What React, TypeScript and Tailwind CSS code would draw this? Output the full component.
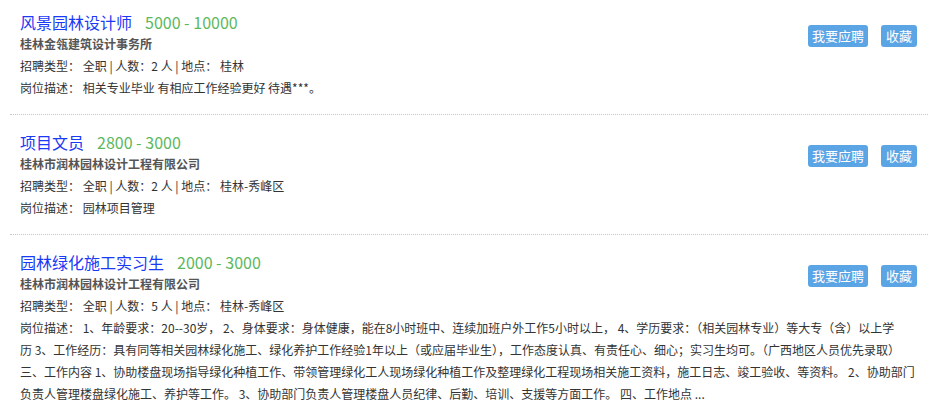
const jobs = [
  {
    title: "风景园林设计师",
    salary: "5000 - 10000",
    company: "桂林金瓴建筑设计事务所",
    count: 2,
    place: "桂林",
    desc: ["相关专业毕业 有相应工作经验更好 待遇***。"],
  },
  {
    title: "项目文员",
    salary: "2800 - 3000",
    company: "桂林市润林园林设计工程有限公司",
    count: 2,
    place: "桂林-秀峰区",
    desc: ["园林项目管理"],
  },
  {
    title: "园林绿化施工实习生",
    salary: "2000 - 3000",
    company: "桂林市润林园林设计工程有限公司",
    count: 5,
    place: "桂林-秀峰区",
    desc: [
      "1、年龄要求：20--30岁， 2、身体要求：身体健康，能在8小时班中、连续加班户外工作5小时以上， 4、学历要求：（相关园林专业）等大专（含）以上学",
      "历 3、工作经历：具有同等相关园林绿化施工、绿化养护工作经验1年以上（或应届毕业生），工作态度认真、有责任心、细心；实习生均可。（广西地区人员优先录取）",
      "三、工作内容 1、协助楼盘现场指导绿化种植工作、带领管理绿化工人现场绿化种植工作及整理绿化工程现场相关施工资料，施工日志、竣工验收、等资料。 2、协助部门",
      "负责人管理楼盘绿化施工、养护等工作。 3、协助部门负责人管理楼盘人员纪律、后勤、培训、支援等方面工作。 四、工作地点 ...",
    ],
  },
];

export default function App() {
  return (
    <div className="min-h-screen bg-white font-['Noto_Sans_CJK_SC',sans-serif] text-[#333]">
      <ul className="ml-[10px] w-[918px]">
        {jobs.map((job, i) => (
          <li
            key={job.title}
            className={`border-b border-dotted border-[#c8c8c8] px-[10px] pb-[15px] ${i === 0 ? "pt-[11px]" : "pt-[16px]"}`}
          >
            <div className="flex">
              <div className="flex-1">
                <div className="flex h-[22px] items-center">
                  <a className="text-[16px] leading-[22px] text-[#1a3af5]">{job.title}</a>
                  <span className="ml-[13px] text-[16px] leading-[22px] text-[#5cb85c]">{job.salary}</span>
                </div>
                <div className="text-[12px] font-bold leading-[22px] text-[#555]">{job.company}</div>
                <div className="text-[12px] leading-[22px]">
                  招聘类型： 全职 | 人数：{job.count} 人 | 地点： {job.place}
                </div>
              </div>
              <div className="mt-[14px] flex items-start gap-[13px] pr-[1px]">
                <button className="h-[22px] w-[60px] rounded-[3px] bg-[#5ba5e5] text-[13px] leading-[22px] text-white">
                  我要应聘
                </button>
                <button className="h-[22px] w-[36px] rounded-[3px] bg-[#5ba5e5] text-[13px] leading-[22px] text-white">
                  收藏
                </button>
              </div>
            </div>
            <div className="text-[12px] leading-[22px]">
              {job.desc.map((line, j) => (
                <p key={j} className="whitespace-nowrap">
                  {j === 0 ? "岗位描述： " : ""}
                  {line}
                </p>
              ))}
            </div>
          </li>
        ))}
      </ul>
    </div>
  );
}
